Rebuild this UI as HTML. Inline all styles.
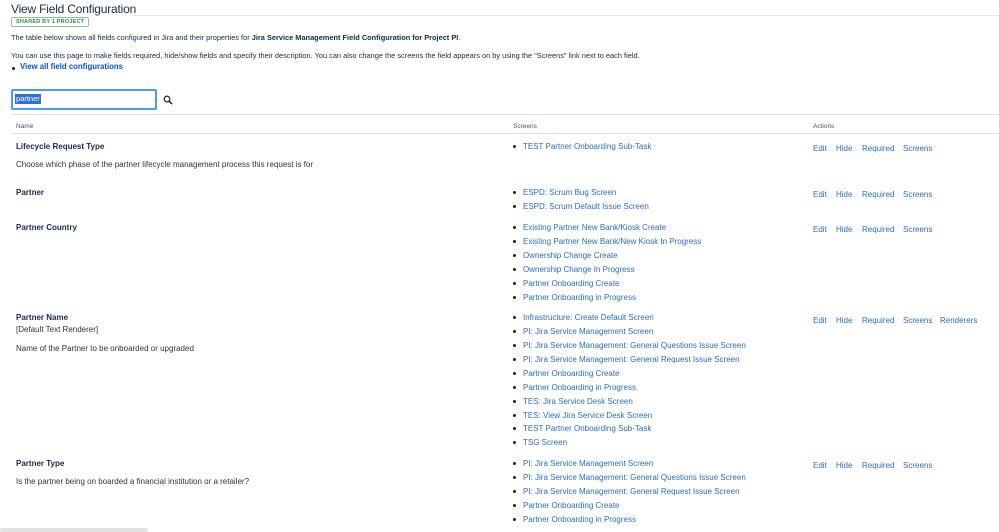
<!DOCTYPE html>
<html><head><meta charset="utf-8"><style>
body{margin:0;width:999px;height:532px;overflow:hidden;background:#fff;font-family:"Liberation Sans",sans-serif;color:#172b4d;position:relative}
.a{position:absolute;white-space:nowrap;font-size:8px;line-height:10px}
.l{color:#2d6cc0}
.b{font-weight:bold}
.g{color:#44546f}
.d{position:absolute;width:3px;height:3px;background:#222;border-radius:50%}
</style></head><body>
<div class="a" style="left:11px;top:2px;font-size:12px;line-height:15px;color:#172b4d;letter-spacing:-0.2px">View Field Configuration</div>
<div style="position:absolute;left:134px;top:15px;width:865px;height:1px;background:#e4e6ea"></div>
<div class="a b" style="left:11px;top:17px;font-size:5.5px;line-height:8px;color:#2e8a3e;border:1px solid #8bc49a;border-radius:2px;padding:0 4px;letter-spacing:0.2px">SHARED BY 1 PROJECT</div>
<div class="a" style="left:11px;top:33px;font-size:7.4px">The table below shows all fields configured in Jira and their properties for <b>Jira Service Management Field Configuration for Project PI</b>.</div>
<div class="a" style="left:11px;top:51px;font-size:7.4px">You can use this page to make fields required, hide/show fields and specify their description. You can also change the screens the field appears on by using the "Screens" link next to each field.</div>
<div class="d" style="left:12px;top:67px"></div>
<div class="a b" style="left:20px;top:62px;font-size:7.8px;color:#0b52c9">View all field configurations</div>
<div style="position:absolute;left:11px;top:89px;width:142px;height:17px;border:2px solid #4c9aff;border-radius:2px"></div>
<div class="a" style="left:15px;top:94px;font-size:7.5px;color:#fff;background:#2f6fd6;padding:0 1px">partner</div>
<svg style="position:absolute;left:163px;top:95px" width="10" height="10" viewBox="0 0 10 10"><circle cx="4" cy="4" r="2.8" fill="none" stroke="#333" stroke-width="1.3"/><path d="M6 6L9 9" stroke="#333" stroke-width="1.6"/></svg>
<div style="position:absolute;left:11px;top:114px;width:988px;height:1px;background:#dfe1e6"></div>
<div class="a g" style="left:16px;top:122px;font-size:6.5px">Name</div>
<div class="a g" style="left:513px;top:122px;font-size:6.5px">Screens</div>
<div class="a g" style="left:813px;top:122px;font-size:6.5px">Actions</div>
<div style="position:absolute;left:11px;top:133px;width:988px;height:1px;background:#dfe1e6"></div>

<div class="a b" style="left:16px;top:142px">Lifecycle Request Type</div>
<div class="a" style="left:16px;top:160px;color:#333">Choose which phase of the partner lifecycle management process this request is for</div>
<div class="a b" style="left:16px;top:188px">Partner</div>
<div class="a b" style="left:16px;top:223px">Partner Country</div>
<div class="a b" style="left:16px;top:313px">Partner Name</div>
<div class="a" style="left:16px;top:325px;color:#333">[Default Text Renderer]</div>
<div class="a" style="left:16px;top:344px;color:#333">Name of the Partner to be onboarded or upgraded</div>
<div class="a b" style="left:16px;top:459px">Partner Type</div>
<div class="a" style="left:16px;top:477px;color:#333">Is the partner being on boarded a financial institution or a retailer?</div>

<div id="s"></div>
<script>
var items=[[146,"TEST Partner Onboarding Sub-Task"],[192,"ESPD: Scrum Bug Screen"],[206,"ESPD: Scrum Default Issue Screen"],[227,"Existing Partner New Bank/Kiosk Create"],[241,"Existing Partner New Bank/New Kiosk In Progress"],[255,"Ownership Change Create"],[269,"Ownership Change In Progress"],[283,"Partner Onboarding Create"],[297,"Partner Onboarding in Progress"],[317,"Infrastructure: Create Default Screen"],[331,"PI: Jira Service Management Screen"],[345,"PI: Jira Service Management: General Questions Issue Screen"],[359,"PI: Jira Service Management: General Request Issue Screen"],[373,"Partner Onboarding Create"],[387,"Partner Onboarding in Progress"],[401,"TES: Jira Service Desk Screen"],[415,"TES: View Jira Service Desk Screen"],[428,"TEST Partner Onboarding Sub-Task"],[442,"TSG Screen"],[463,"PI: Jira Service Management Screen"],[477,"PI: Jira Service Management: General Questions Issue Screen"],[491,"PI: Jira Service Management: General Request Issue Screen"],[505,"Partner Onboarding Create"],[519,"Partner Onboarding in Progress"]];
var h="";
items.forEach(function(i){h+='<div class="d" style="left:513px;top:'+(i[0]-1)+'px"></div><div class="a l" style="left:523px;top:'+(i[0]-4)+'px">'+i[1]+'</div>';});
[148,194,229,320,465].forEach(function(y,k){
var acts=[["Edit",813],["Hide",836],["Required",862],["Screens",903]];
if(k==3)acts.push(["Renderers",940]);
acts.forEach(function(a){h+='<div class="a l" style="left:'+a[1]+'px;top:'+(y-4)+'px">'+a[0]+'</div>';});});
document.getElementById("s").innerHTML=h;
</script>
<div style="position:absolute;left:0;top:528px;width:148px;height:4px;background:#e2e2e4;border-radius:2px"></div>
</body></html>
